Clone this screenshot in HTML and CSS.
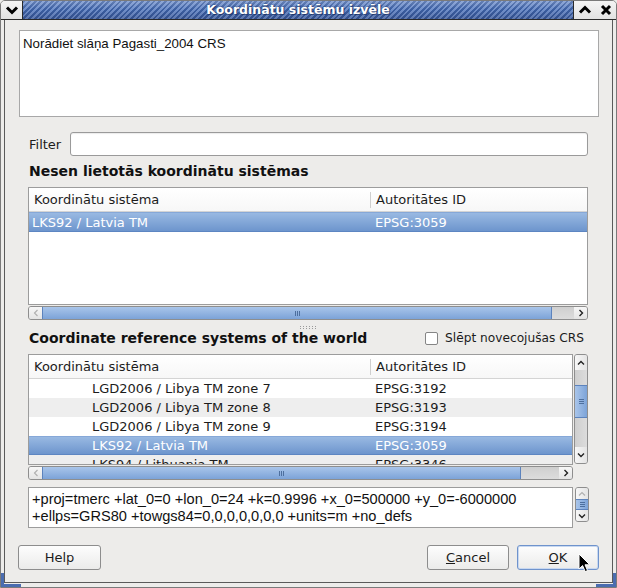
FILE: index.html
```html
<!DOCTYPE html>
<html>
<head>
<meta charset="utf-8">
<title>Koordinātu sistēmu izvēle</title>
<link rel="stylesheet" href="styles.css">
</head>
<body>
<div class="window">
  <div class="titlebar">
    <div class="tb-btn tb-menu">
      <svg width="14" height="10" viewBox="0 0 14 10"><path d="M2 2.5 7 7.5 12 2.5" fill="none" stroke="#000" stroke-width="3"/></svg>
    </div>
    <div class="tb-title">Koordinātu sistēmu izvēle</div>
    <div class="tb-right">
      <div class="tb-btn">
        <svg width="14" height="10" viewBox="0 0 14 10"><path d="M2 7.5 7 2.5 12 7.5" fill="none" stroke="#000" stroke-width="3"/></svg>
      </div>
      <div class="tb-btn">
        <svg width="12" height="12" viewBox="0 0 12 12"><path d="M2 2 10 10M10 2 2 10" fill="none" stroke="#000" stroke-width="3"/></svg>
      </div>
    </div>
  </div>

  <div class="frame">
    <div class="panel">
      <div class="desc">Norādiet slāņa Pagasti_2004 CRS</div>

      <div class="filter-row">
        <span class="filter-label">Filter</span>
        <div class="text-input"></div>
      </div>

      <div class="section-title first">Nesen lietotās koordinātu sistēmas</div>

      <div class="recent">
        <div class="view view-recent">
          <div class="hdr"><div class="c1">Koordinātu sistēma</div><div class="c2">Autoritātes ID</div></div>
          <div class="row sel"><div class="c1">LKS92 / Latvia TM</div><div class="c2">EPSG:3059</div></div>
        </div>
        <div class="hscroll">
          <div class="sb-btn"><svg width="6" height="8" viewBox="0 0 6 8"><path d="M4.5 1 1.5 4 4.5 7" fill="none" stroke="#b0b0b0" stroke-width="1.2"/></svg></div>
          <div class="sb-track"><div class="sb-thumb thumb-recent"><span class="grip-h"></span></div></div>
          <div class="sb-btn"><svg width="6" height="8" viewBox="0 0 6 8"><path d="M1.5 1 4.5 4 1.5 7" fill="none" stroke="#222" stroke-width="1.4"/></svg></div>
        </div>
      </div>

      <div class="splitter"><span class="dots"></span><span class="dots"></span></div>

      <div class="world-head">
        <div class="section-title">Coordinate reference systems of the world</div>
        <label class="check"><span class="box"></span>Slēpt novecojušas CRS</label>
      </div>

      <div class="world">
        <div class="world-main">
          <div class="view view-world">
            <div class="hdr"><div class="c1">Koordinātu sistēma</div><div class="c2">Autoritātes ID</div></div>
            <div class="row"><div class="c1 indent">LGD2006 / Libya TM zone 7</div><div class="c2">EPSG:3192</div></div>
            <div class="row alt"><div class="c1 indent">LGD2006 / Libya TM zone 8</div><div class="c2">EPSG:3193</div></div>
            <div class="row"><div class="c1 indent">LGD2006 / Libya TM zone 9</div><div class="c2">EPSG:3194</div></div>
            <div class="row sel"><div class="c1 indent">LKS92 / Latvia TM</div><div class="c2">EPSG:3059</div></div>
            <div class="row alt"><div class="c1 indent">LKS94 / Lithuania TM</div><div class="c2">EPSG:3346</div></div>
          </div>
          <div class="hscroll">
            <div class="sb-btn"><svg width="6" height="8" viewBox="0 0 6 8"><path d="M4.5 1 1.5 4 4.5 7" fill="none" stroke="#b0b0b0" stroke-width="1.2"/></svg></div>
            <div class="sb-track"><div class="sb-thumb thumb-world"><span class="grip-h"></span></div></div>
            <div class="sb-btn"><svg width="6" height="8" viewBox="0 0 6 8"><path d="M1.5 1 4.5 4 1.5 7" fill="none" stroke="#222" stroke-width="1.4"/></svg></div>
          </div>
        </div>
        <div class="vscroll vs-world">
          <div class="vb-btn"><svg width="8" height="6" viewBox="0 0 8 6"><path d="M1 4.5 4 1.5 7 4.5" fill="none" stroke="#222" stroke-width="1.4"/></svg></div>
          <div class="vb-track"><div class="vb-thumb"><span class="grip-v"></span></div></div>
          <div class="vb-btn"><svg width="8" height="6" viewBox="0 0 8 6"><path d="M1 1.5 4 4.5 7 1.5" fill="none" stroke="#222" stroke-width="1.4"/></svg></div>
        </div>
      </div>

      <div class="proj-row">
        <div class="proj">+proj=tmerc +lat_0=0 +lon_0=24 +k=0.9996 +x_0=500000 +y_0=-6000000<br>+ellps=GRS80 +towgs84=0,0,0,0,0,0,0 +units=m +no_defs</div>
        <div class="vscroll vs-proj">
          <div class="vb-btn"><svg width="8" height="6" viewBox="0 0 8 6"><path d="M1 4.5 4 1.5 7 4.5" fill="none" stroke="#b0b0b0" stroke-width="1.2"/></svg></div>
          <div class="vb-thumb"><span class="grip-v"></span></div>
          <div class="vb-btn"><svg width="8" height="6" viewBox="0 0 8 6"><path d="M1 1.5 4 4.5 7 1.5" fill="none" stroke="#222" stroke-width="1.4"/></svg></div>
        </div>
      </div>

      <div class="buttons">
        <button class="btn">Help</button>
        <span class="spacer"></span>
        <button class="btn"><u>C</u>ancel</button>
        <button class="btn default"><u>O</u>K</button>
      </div>
    </div>
  </div>

  <div class="grip grip-l"></div>
  <div class="grip grip-r"></div>

  <svg class="cursor" width="13" height="21" viewBox="0 0 13 21">
    <path d="M1 1V16L4.6 12.6 7.2 18.6 9.6 17.6 7 11.8H11.8Z" fill="#000" stroke="#fff" stroke-width="1" stroke-linejoin="round"/>
  </svg>
</div>
</body>
</html>
```

FILE: styles.css
```css
* { box-sizing: border-box; }

html, body {
  margin: 0;
  padding: 0;
}

body {
  width: 617px;
  height: 588px;
  overflow: hidden;
  background: #edecea;
  font-family: "DejaVu Sans", sans-serif;
  font-size: 13px;
  color: #1c1c1c;
}

/* ---------- window frame ---------- */
.window {
  position: relative;
  width: 617px;
  height: 588px;
  background: #edecea;
  border: 1px solid #7a7a7a;
  border-radius: 5px 5px 0 0;
  display: flex;
  flex-direction: column;
  overflow: hidden;
}

.titlebar {
  height: 19px;
  display: flex;
  border-bottom: 1px solid #2a2a2a;
  flex: none;
}

.tb-btn {
  width: 21px;
  display: flex;
  align-items: center;
  justify-content: center;
  background: linear-gradient(#f4f4f4, #e2e2e2);
}

.tb-menu {
  border-right: 1px solid #2a2a2a;
  width: 22px;
}

.tb-title {
  flex: 1;
  color: #fff;
  font-weight: bold;
  font-size: 12.5px;
  line-height: 18px;
  text-align: center;
  text-shadow: 0 0 2px #1c3466, 1px 1px 0 rgba(20, 40, 90, 0.6);
  background:
    linear-gradient(rgba(255, 255, 255, 0.22), rgba(255, 255, 255, 0) 45%, rgba(0, 0, 30, 0.18)),
    repeating-linear-gradient(135deg, #3c5fa2 0 2px, #7190cb 2px 4px);
}

.tb-right {
  display: flex;
  border-left: 1px solid #2a2a2a;
}

.tb-right .tb-btn { width: 21px; }

.frame {
  flex: 1;
  display: flex;
  padding: 0 3px 4px 3px;
}

.panel {
  flex: 1;
  display: flex;
  flex-direction: column;
  border: 1px solid #5a5a5a;
  border-top: none;
}

/* ---------- description ---------- */
.desc {
  margin: 10px 13px 0 14px;
  height: 87px;
  background: #fff;
  border: 1px solid #a8a8a8;
  padding: 5px 3px;
  font-family: "Liberation Sans", Arial, sans-serif;
  font-size: 13.3px;
  line-height: 15px;
  color: #111;
}

/* ---------- filter ---------- */
.filter-row {
  margin-top: 15px;
  height: 24px;
  display: flex;
  align-items: center;
  padding-left: 24px;
}

.filter-label {
  width: 41px;
}

.text-input {
  width: 518px;
  height: 24px;
  background: #fff;
  border: 1px solid #9a9a9a;
  border-radius: 3px;
  box-shadow: inset 0 1px 1px rgba(0, 0, 0, 0.08);
}

.section-title {
  font-weight: bold;
  font-size: 14px;
  line-height: 17px;
  color: #111;
}

.section-title.first {
  margin: 7px 0 0 24px;
}

/* ---------- tables ---------- */
.recent {
  margin: 7px 24px 0 23px;
}

.view {
  background: #fff;
  border: 1px solid #9c9c9c;
  overflow: hidden;
}

.view-recent { height: 118px; }
.view-world { height: 111px; }

.hdr {
  height: 24px;
  display: flex;
  align-items: center;
  border-bottom: 1px solid #d4d4d4;
  background: linear-gradient(#ffffff, #f7f7f7);
}

.hdr .c1 { padding-left: 5px; }

.hdr .c2 {
  border-left: 1px solid #cfcfcf;
  height: 16px;
  line-height: 16px;
}

.c1 {
  width: 341px;
  padding-left: 3px;
  white-space: nowrap;
}

.c1.indent { padding-left: 63px; }

.c2 {
  flex: 1;
  padding-left: 5px;
  white-space: nowrap;
}

.row {
  display: flex;
  align-items: center;
  height: 19px;
}

.view-recent .row { height: 20px; }

.row.alt { background: #eeeeee; }

.row.sel {
  color: #fff;
  background: linear-gradient(#99b9e2, #6d95cd);
  border-top: 1px solid #86a8d8;
  border-bottom: 1px solid #5d86c2;
}

/* ---------- scrollbars ---------- */
.hscroll {
  margin-top: 1px;
  height: 14px;
  display: flex;
  border: 1px solid #8e8e8e;
  border-radius: 3px;
  overflow: hidden;
  background: #d8d8d8;
}

.sb-btn {
  width: 13px;
  display: flex;
  align-items: center;
  justify-content: center;
  background: linear-gradient(#f7f7f7, #e4e4e4);
}

.sb-track {
  flex: 1;
  display: flex;
  background: linear-gradient(#cfcfcf, #dcdcdc);
}

.sb-thumb {
  height: 100%;
  display: flex;
  align-items: center;
  justify-content: center;
  background: linear-gradient(#a9c5ea, #7ca3d8);
  border-left: 1px solid #5c83bd;
  border-right: 1px solid #5c83bd;
}

.thumb-recent { width: 510px; }
.thumb-world { width: 479px; }

.grip-h {
  width: 5px;
  height: 5px;
  background: repeating-linear-gradient(90deg, #4d6f9e 0 1px, transparent 1px 2px);
}

.grip-v {
  width: 5px;
  height: 5px;
  background: repeating-linear-gradient(180deg, #4d6f9e 0 1px, transparent 1px 2px);
}

.splitter {
  height: 10px;
  display: flex;
  flex-direction: column;
  align-items: center;
  justify-content: flex-end;
  gap: 1px;
  padding-bottom: 1px;
}

.dots {
  width: 18px;
  height: 1px;
  background: repeating-linear-gradient(90deg, #9a9a9a 0 1px, transparent 1px 3px);
}

.world-head {
  height: 16px;
  display: flex;
  align-items: center;
  justify-content: space-between;
  padding: 0 28px 0 24px;
}

.check {
  display: flex;
  align-items: center;
  gap: 7px;
  font-size: 12.2px;
}

.box {
  width: 13px;
  height: 13px;
  background: #fff;
  border: 1px solid #858585;
  border-radius: 2px;
}

.world {
  margin: 8px 23px 0 23px;
  display: flex;
  gap: 1px;
  align-items: flex-start;
}

.world-main { width: 545px; }

.vscroll {
  width: 14px;
  display: flex;
  flex-direction: column;
  border: 1px solid #8e8e8e;
  border-radius: 3px;
  overflow: hidden;
  background: linear-gradient(90deg, #cfcfcf, #dcdcdc);
}

.vs-world { height: 110px; }
.vs-proj { height: 35px; }

.vb-btn {
  height: 15px;
  display: flex;
  align-items: center;
  justify-content: center;
  background: linear-gradient(90deg, #f7f7f7, #e4e4e4);
}

.vs-proj .vb-btn { height: 11px; }

.vb-track {
  flex: 1;
  padding-top: 15px;
}

.vb-thumb {
  height: 33px;
  display: flex;
  align-items: center;
  justify-content: center;
  background: linear-gradient(90deg, #a9c5ea, #7ca3d8);
  border-top: 1px solid #5c83bd;
  border-bottom: 1px solid #5c83bd;
}

.vs-world .vb-btn:last-child { height: 16px; }

.vs-proj .vb-thumb { flex: 1; height: auto; }

/* ---------- proj string ---------- */
.proj-row {
  margin: 7px 23px 0 23px;
  display: flex;
  gap: 2px;
  align-items: flex-start;
}

.proj {
  flex: 1;
  height: 41px;
  background: #fff;
  border: 1px solid #9c9c9c;
  padding: 3px 3px 0 3px;
  font-family: "Liberation Sans", Arial, sans-serif;
  font-size: 14.6px;
  line-height: 17px;
  color: #111;
  white-space: nowrap;
  overflow: hidden;
}

/* ---------- buttons ---------- */
.buttons {
  margin-top: 17px;
  display: flex;
  gap: 8px;
  padding: 0 13px;
}

.spacer { flex: 1; }

.btn {
  width: 82px;
  height: 25px;
  font-family: "DejaVu Sans", sans-serif;
  font-size: 13px;
  color: #1c1c1c;
  background: linear-gradient(#fdfdfd, #ebebea);
  border: 1px solid #8d8d8d;
  border-radius: 3px;
  padding: 0;
}

.btn:first-child { width: 83px; }

.btn.default {
  border-color: #6f93cc;
  box-shadow: inset 0 0 0 1px #c8d8f0;
}

/* ---------- decorations ---------- */
.grip {
  position: absolute;
  bottom: -1px;
  width: 21px;
  height: 15px;
  border-bottom: 4px solid #4b6db0;
}

.grip-l {
  left: -1px;
  border-left: 4px solid #4b6db0;
}

.grip-r {
  right: -1px;
  border-right: 4px solid #4b6db0;
}

.cursor {
  position: absolute;
  left: 577px;
  top: 552px;
}
```
